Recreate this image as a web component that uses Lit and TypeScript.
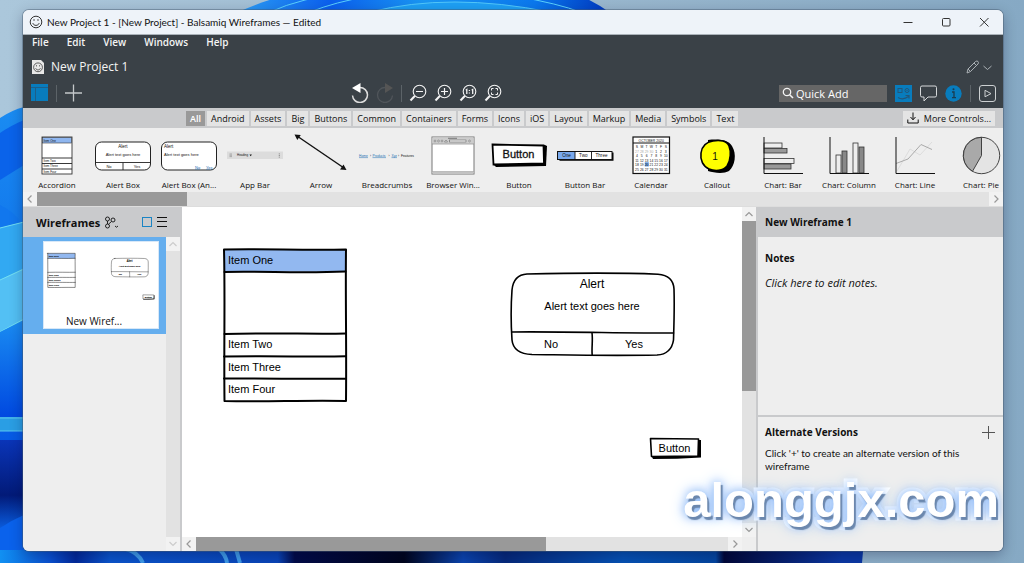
import { LitElement, html, svg, css, nothing } from "lit";
import { customElement, state } from "lit/decorators.js";
import { classMap } from "lit/directives/class-map.js";

const INK = "#111";

/* ---- library thumbnails ---- */

const thumbs: Record<string, any> = {
  accordion: svg`
    <rect x="18" y="5" width="30" height="37" fill="#fff" stroke="#333" stroke-width=".9"/>
    <rect x="18.500" y="5.500" width="29" height="5.500" fill="#8fb6ef" stroke="#333" stroke-width=".6"/>
    <path d="M18 26h30M18 31.500h30M18 37h30" stroke="#222" stroke-width=".9"/>
    <text x="19.500" y="9.600" font-size="3">Item One</text><text x="19.500" y="30" font-size="3">Item Two</text>
    <text x="19.500" y="35.400" font-size="3">Item Three</text><text x="19.500" y="41" font-size="3">Item Four</text>`,
  alert: svg`
    <rect x="5.500" y="10" width="55" height="28" rx="6" fill="#fff" stroke="#222"/>
    <path d="M5.500 30.500h55M33 30.500v7.500" stroke="#222" stroke-width=".9"/>
    <text x="33" y="16" text-anchor="middle" font-size="4.500">Alert</text>
    <text x="33" y="23.500" text-anchor="middle" font-size="4">Alert text goes here</text>
    <text x="19" y="36" text-anchor="middle" font-size="4">No</text><text x="47" y="36" text-anchor="middle" font-size="4">Yes</text>`,
  alertAndroid: svg`
    <rect x="5.500" y="10" width="55" height="28" rx="6" fill="#fff" stroke="#222"/>
    <text x="8" y="16" font-size="4.500">Alert</text><text x="8" y="23.500" font-size="4">Alert text goes here</text>
    <g fill="#1f6fb2"><text x="39" y="36.500" font-size="4">No</text><text x="50" y="36.500" font-size="4">Yes</text>
    <path d="M39 37.300h5M50 37.300h6" stroke="#1f6fb2" stroke-width=".4"/></g>`,
  appbar: svg`
    <rect x="5" y="19.500" width="56" height="7.500" fill="#dcdcdc"/>
    <path d="M7.500 22h2.500M7.500 23.300h2.500M7.500 24.600h2.500" stroke="#777" stroke-width=".5"/>
    <text x="15" y="24.300" font-size="3">Heading</text><path d="M27.500 22.600h2.400l-1.200 1.600z"/>
    <path d="M57.300 21.500v4" stroke="#555" stroke-width=".8" stroke-dasharray=".8 .8"/>`,
  arrow: svg`
    <path d="M9 4L56 36" stroke="#111" stroke-width="1.400"/>
    <path d="M6.500 2.500l6.300.4-3.500 5zM58.500 38l-6.500-.6 3.500-5z" fill="#111"/>`,
  breadcrumbs: svg`
    <g font-size="3.300"><text x="5" y="24.800" fill="#1f6fb2">Home</text><text x="16" y="24.800">›</text>
    <text x="18.500" y="24.800" fill="#1f6fb2">Products</text><text x="34.500" y="24.800">›</text>
    <text x="37.500" y="24.800" fill="#1f6fb2">Xyz</text><text x="44" y="24.800">›</text><text x="47" y="24.800">Features</text></g>
    <path d="M5 25.600h9M18.500 25.600h13.500M37.500 25.600h5.500" stroke="#1f6fb2" stroke-width=".5"/>`,
  browser: svg`
    <rect x="12" y="5" width="42" height="37" fill="#fff" stroke="#777"/>
    <rect x="12.400" y="5.400" width="41.200" height="6.400" fill="#ccc"/>
    <path d="M12.400 40h41.200v1.600h-41.200z" fill="#ccc"/>
    <path d="M12 12h42M12.500 39.700h41" stroke="#888" stroke-width=".7"/>
    <path d="M28 6.300h9" stroke="#555" stroke-width=".7"/>
    <g fill="#eee" stroke="#555" stroke-width=".5"><circle cx="15" cy="9" r=".9"/><circle cx="18.500" cy="9" r=".9"/><circle cx="22" cy="9" r=".9"/><path d="M24.500 10l1.500-2 1.500 2z"/><rect x="29.500" y="8" width="16.500" height="2"/><circle cx="49.500" cy="9" r=".9"/></g>`,
  button: svg`
    <path d="M8 15l51-2 2 1-1 20-50 1-3-3z" fill="#000"/>
    <path d="M6.500 12.500L57.500 13.500 58 31.500 7.500 32.500z" fill="#fff" stroke="#000" stroke-width="1.800"/>
    <text x="32.500" y="26.200" font-size="11" text-anchor="middle" class="strong">Button</text>`,
  buttonBar: svg`
    <path d="M6.500 20.500h55v8.200h-54z" fill="#000"/>
    <rect x="5.500" y="19.500" width="54.500" height="8" fill="#fff" stroke="#111"/>
    <rect x="6" y="20" width="17" height="7" fill="#79a9ec"/><path d="M23 19.500v8M39.500 19.500v8" stroke="#111" stroke-width=".9"/>
    <g font-size="4.600" text-anchor="middle"><text x="14.500" y="25.200">One</text><text x="31.300" y="25.200">Two</text><text x="49.500" y="25.200">Three</text></g>`,
  calendar: svg`
    <rect x="15" y="5" width="36.500" height="36.500" fill="#fff" stroke="#111" stroke-width="1.200"/>
    <path d="M15 11h36.500" stroke="#111"/><text x="33.200" y="9.600" font-size="3.400" text-anchor="middle">OCTOBER 2020</text>
    <rect x="26.800" y="30.200" width="4" height="4.300" fill="#6fa3e6"/>
    <g font-size="3.400">
    ${["S M T W T F S", "27 28 29 30 1 2 3", "4 5 6 7 8 9 10", "11 12 13 14 15 16 17", "18 19 20 21 22 23 24", "25 26 27 28 29 30 31"].map((row, r) =>
      row.split(" ").map((d, c) => svg`<text x=${19 + c * 4.8} y=${16.2 + r * 4.5} text-anchor="middle" fill=${r === 1 && c < 4 ? "#aaa" : INK}>${d}</text>`))}
    </g>`,
  callout: svg`
    <path d="M24 8c10-1 20-.5 24 6 5 8 3 20-3 25-5 3-15 2-21 0z" fill="#000"/>
    <path d="M29 9c7-1.500 14 0 16 5s2 14-2 20c-4 5-12 5.500-18 3s-9-9-8-16 5-11 12-12z" fill="#ff0" stroke="#000" stroke-width="1.600"/>
    <text x="31" y="28" font-size="10" text-anchor="middle">1</text>`,
  chartBar: svg`
    <g stroke="#333" stroke-width=".8"><rect x="14" y="11" width="18" height="5" fill="#eee"/><rect x="14" y="16.500" width="23" height="4.500" fill="#999"/>
    <rect x="14" y="26.500" width="30" height="5" fill="#eee"/><rect x="14" y="32" width="27" height="5" fill="#999"/></g>
    <path d="M14 5v36.500h39" fill="none" stroke="#111"/>`,
  chartColumn: svg`
    <g stroke="#333" stroke-width=".8"><rect x="20" y="23" width="5" height="18" fill="#eee"/><rect x="26" y="19" width="5" height="22" fill="#888"/>
    <rect x="37" y="11" width="5" height="30" fill="#eee"/><rect x="43" y="15" width="5" height="26" fill="#888"/></g>
    <path d="M14 5v36.500h39" fill="none" stroke="#111"/>`,
  chartLine: svg`
    <path d="M15 39L28 17l10 6 12-13" fill="none" stroke="#ddd"/><path d="M14 31.500l12-4.500 13-14.500 11 5" fill="none" stroke="#aaa"/>
    <path d="M14 5v36.500h39" fill="none" stroke="#111"/>`,
  chartPie: svg`
    <circle cx="33.500" cy="23.500" r="18.200" fill="#e4e4e4" stroke="#333" stroke-width=".9"/>
    <path d="M33.500 23.500V5.300a18.200 18.200 0 0 0-9 34z" fill="#a9a9a9" stroke="#333" stroke-width=".9"/>`,
};

const library: [string, string][] = [
  ["accordion", "Accordion"], ["alert", "Alert Box"], ["alertAndroid", "Alert Box (An..."], ["appbar", "App Bar"],
  ["arrow", "Arrow"], ["breadcrumbs", "Breadcrumbs"], ["browser", "Browser Win..."], ["button", "Button"],
  ["buttonBar", "Button Bar"], ["calendar", "Calendar"], ["callout", "Callout"], ["chartBar", "Chart: Bar"],
  ["chartColumn", "Chart: Column"], ["chartLine", "Chart: Line"], ["chartPie", "Chart: Pie"],
];

const categories = ["All", "Android", "Assets", "Big", "Buttons", "Common", "Containers", "Forms", "Icons", "iOS", "Layout", "Markup", "Media", "Symbols", "Text"];

/* ---- sketch shapes shared by the canvas and the navigator preview ---- */

const accordionShape = svg`
  <path d="M2 2L123 2 122 24 2 23z" fill="#92b8f0"/>
  <g fill="none" stroke="#000" stroke-width="2" stroke-linecap="round" stroke-linejoin="round">
    <path d="M1 1.500C40 .8 80 2.200 123 1.500C122.400 50 123.600 100 123 153C80 152.200 40 154 1.500 153C.8 100 2.200 50 1 1.500z"/>
    <path d="M1.500 24C40 23.100 80 25.500 122.500 23.500M1.500 86C50 84.500 90 86.500 123 85.500M1 108.500C50 107.900 90 108.900 123 108.300M1 130.500C50 130 90 131.300 123 130.700"/>
  </g>
  <g font-size="11"><text x="5" y="16">Item One</text><text x="5" y="100">Item Two</text><text x="5" y="122.500">Item Three</text><text x="5" y="145">Item Four</text></g>`;

const alertShape = svg`
  <g fill="none" stroke="#000" stroke-width="1.600" stroke-linecap="round">
    <path d="M17 2C60 1 110 .6 148 2.200C158 3 163.500 8 164 17C164.600 35 164 52 163.500 68C162 78 156 82.500 147 83C100 84 60 83 22 82.500C10 82 3 78 2 68C.8 50 1 32 2 18C3 8 8 2.500 17 2z"/>
    <path d="M2 60C50 59.500 110 61 163.500 61M82 61C83 68 81.500 76 82.200 83" />
  </g>
  <g text-anchor="middle" font-size="11"><text x="82" y="16" font-size="12">Alert</text><text x="82" y="38">Alert text goes here</text>
  <text x="41" y="76">No</text><text x="124" y="76">Yes</text></g>`;

const buttonShape = svg`
  <path d="M3 3L52 3 52 20.500C36 21.500 20 22 4 22L2 18z" fill="#000"/>
  <path d="M1.500 1.500L49.500 2 49 19 2.500 19.500z" fill="#fff" stroke="#000" stroke-width="1.600" stroke-linejoin="round"/>
  <text x="25.500" y="14.500" font-size="11" text-anchor="middle">Button</text>`;

const chevron = (d: string) => html`<svg viewBox="0 0 14 14" class="chev"><path d=${d} fill="none" stroke="currentColor" stroke-width="1.200"/></svg>`;
const UP = "M3.500 9L7 5.500 10.500 9";
const DOWN = "M3.500 5L7 8.500 10.500 5";
const LEFT = "M8.500 3.500L5 7l3.500 3.500";
const RIGHT = "M5.500 3.500L9 7l-3.500 3.500";

const smiley = svg`<circle cx="7" cy="7" r="5.800"/><path d="M3.800 8.200c1.200 2.900 5.200 2.900 6.400 0M5 4.200v1.600M9 4.200v1.600"/>`;

@customElement("desk-wallpaper")
export class DeskWallpaper extends LitElement {
  static styles = css`
    :host { display: block; overflow: hidden; background: linear-gradient(90deg, #abc7db, #9dbad0 50%, #86a9c4); }
    .art { display: block; width: 100%; height: 100%; }
  `;
  render() {
    return html`<svg class="art" viewBox="0 0 1024 563" preserveAspectRatio="none" aria-hidden="true">
      <defs>
        <linearGradient id="a" x1="0" y1="0" x2="1" y2="0"><stop offset="0" stop-color="#2c9ef5"/><stop offset=".25" stop-color="#0b5fee"/><stop offset=".5" stop-color="#1a96f2"/><stop offset=".8" stop-color="#0b78ee"/><stop offset="1" stop-color="#0038c0"/></linearGradient>
        <linearGradient id="b" x1="0" y1="0" x2="0" y2="1"><stop offset="0" stop-color="#1a8cf2"/><stop offset="1" stop-color="#0048e0"/></linearGradient>
        <linearGradient id="c" x1="0" y1="0" x2="0" y2="1"><stop offset="0" stop-color="#0a35b8"/><stop offset=".6" stop-color="#021a78"/><stop offset="1" stop-color="#0b63e8"/></linearGradient>
        <linearGradient id="d" x1="0" y1="0" x2="842" y2="0" gradientUnits="userSpaceOnUse">
          <stop offset="0" stop-color="#1190f2"/><stop offset=".06" stop-color="#0a50d0"/><stop offset=".09" stop-color="#032a9a"/><stop offset=".13" stop-color="#0b55cc"/><stop offset=".33" stop-color="#0a45b8"/><stop offset=".35" stop-color="#020b48"/><stop offset=".48" stop-color="#01051c"/><stop offset=".55" stop-color="#0b45b0"/><stop offset=".6" stop-color="#062a7c"/><stop offset=".74" stop-color="#0652b4"/><stop offset=".85" stop-color="#0446a0"/><stop offset=".86" stop-color="#020838"/><stop offset="1" stop-color="#0b38a4"/></linearGradient>
      </defs>
      <path d="M238 12C270 -2 300 -10 330 -12L560 -12Q590 -2 609 12z" fill="url(#a)"/>
      <path d="M370 12Q450 -8 550 12" fill="#1ea0f5" stroke="#52c8fb"/>
      <path d="M270 12Q300 -2 350 -8M310 12Q335 2 370 -4M515 -4Q560 4 580 12" fill="none" stroke="#5bd0fc"/>
      <path d="M0 118Q12 110 24 107V563H0z" fill="url(#b)"/>
      <path d="M0 133Q10 126 24 120V165L0 180z" fill="#0a63ea"/>
      <path d="M0 205Q16 212 24 228V260Q10 262 0 270z" fill="#1177ee"/>
      <path d="M0 228L24 222V320L0 350z" fill="#32a9f2"/>
      <path d="M0 280L24 268V320L0 332z" fill="#53c0f4"/>
      <path d="M0 228L24 222M0 280L24 269M0 332L24 319" stroke="#73e0f2" fill="none"/>
      <path d="M0 332L24 320V418H0z" fill="url(#b)"/>
      <path d="M0 417h24v14H0z" fill="#2a9ee4"/><path d="M0 418h24M0 431h24" stroke="#5bc8f0"/>
      <path d="M0 440h24v84L0 532z" fill="url(#c)"/>
      <path d="M0 528Q12 520 26 514V563H0z" fill="#0a62ec"/>
      <path d="M0 550H842Q866 550 864 540L862 563H0z" fill="url(#d)"/>
      <path d="M126 549Q138 552 143 563M219 549q7 6 8 14M236 549l4 14" stroke="#3f9be8" stroke-width="4" fill="none"/>
    </svg>`;
  }
}

@customElement("app-root")
export class AppRoot extends LitElement {
  @state() private category = "All";

  static styles = css`
    :host {
      display: grid; grid-template: minmax(0, 1fr) / minmax(0, 1fr);
      height: 100vh; font-family: "Open Sans", "Noto Sans", sans-serif; font-size: 10px; color: #111;
    }
    * { box-sizing: border-box; }
    button { font: inherit; color: inherit; border: 0; padding: 0; background: none; }
    h1, h2, h3, p, ul { margin: 0; padding: 0; font-size: inherit; font-weight: inherit; }
    ul { list-style: none; }
    svg { display: block; flex: none; }
    .wallpaper, .window { grid-area: 1 / 1; }
    .line { fill: none; stroke: currentColor; }
    .sketch text, .sketch { font-family: "Liberation Sans", sans-serif; }
    .strong { stroke: #111; stroke-width: .3px; }

    .window {
      z-index: 1; margin: 10px 21px 12px 23px; display: grid;
      grid-template: auto auto auto auto minmax(0, 1fr) / minmax(0, 1fr);
      border-radius: 6px; overflow: hidden; background: #eee;
      box-shadow: 0 0 0 1px rgba(70, 90, 110, .45), 0 4px 14px rgba(0, 0, 40, .3);
    }
    .titlebar { display: flex; align-items: center; height: 25px; background: #eef3f9; padding: 0 12px 0 6px; gap: 4px; border-bottom: 1px solid #aab2b9; color: #333; }
    .titlebar h1 { flex: 1; font-family: "Lato", sans-serif; color: #111; }
    .winbtn { width: 14px; height: 14px; margin-left: 20px; }

    .chrome { background: #3a4147; color: #f4f4f4; height: 73px; display: grid; grid-template-rows: 14px 35px 24px; }
    .menu { display: flex; align-items: center; gap: 18px; padding-left: 9px; font-weight: 600; }
    .project { display: flex; align-items: center; gap: 6px; padding: 0 11px 0 8px; font-size: 12px; }
    .project h2 { flex: 1; }
    .muted { color: #aab0b4; }
    .tools { display: grid; grid-template-columns: 33.2% auto 1fr; align-items: start; padding: 0 7px 0 8px; }
    .group { display: flex; align-items: center; gap: 7px; height: 18px; }
    .end { justify-content: flex-end; gap: 8px; }
    .sep { width: 1px; height: 17px; background: #5c6368; }
    .quick { display: flex; align-items: center; gap: 2px; width: 108px; height: 17px; background: #666; padding: 0 3px; }
    .quick input { min-width: 0; flex: 1; border: 0; padding: 0; background: none; color: #fff; font: 11px "Open Sans", sans-serif; outline: 0; }
    .quick input::placeholder { color: #fff; opacity: 1; }

    .cats { display: grid; grid-template-columns: 163px auto 1fr; align-items: center; height: 20px; background: #c9cacc; padding-right: 8px; font-size: 9px; }
    .tabs { display: flex; gap: 2px; grid-column: 2; }
    .tab, .more { height: 15px; line-height: 15px; padding: 0 4px; background: #e4e4e4; white-space: nowrap; }
    .tab.on { background: #999; color: #fff; font-weight: 600; }
    .more { justify-self: end; display: flex; align-items: center; gap: 5px; }

    .lib { display: flex; height: 64px; overflow: hidden; background: #eee; padding-left: 1px; }
    .item { flex: none; width: 66px; text-align: center; font-size: 8px; line-height: 12px; }
    .thumb { width: 66px; height: 51px; }

    .bar { display: flex; align-items: stretch; background: #e2e2e2; }
    .bar.h { height: 14px; }
    .bar.v { width: 14px; flex-direction: column; }
    .bar button { background: #f2f2f2; color: #999; flex: none; width: 14px; height: 14px; }
    .chev { width: 14px; height: 14px; }
    .dim button { color: #ccc; }
    .grip { background: #999; }
    .rest { flex: 1; }
    .lib-grip { flex: 0 0 15.3%; }
    .v-grip { flex: 0 0 51.5%; }
    .h-grip { flex: 0 0 62.5%; }

    .body { display: grid; grid-template-columns: 159px minmax(0, 1fr) 247px; min-height: 0; border-top: 1px solid #ddd; }
    .nav { display: grid; grid-template: 30px minmax(0, 1fr) / minmax(0, 1fr) 14px; border-right: 2px solid #c9cacc; background: #eee; }
    .navhead { grid-column: 1 / -1; display: flex; align-items: center; gap: 4px; padding: 0 13px; background: #c9cacc; font-weight: 700; font-size: 11px; }
    .navhead h2 { white-space: nowrap; }
    .push { margin-left: auto; }
    .card { background: #65aeee; padding: 4px 7px 5px 20px; }
    .page { background: #fff; height: 88px; display: grid; grid-template-rows: minmax(0, 1fr) 14px; border: 1px solid #d8e8f8; }
    .page svg { width: 113px; height: 69px; }
    .page text { stroke: #111; stroke-width: .4px; }
    .caption { text-align: center; padding-right: 14px; line-height: 14px; }

    .canvas { display: grid; grid-template: minmax(0, 1fr) 14px / minmax(0, 1fr) 14px; background: #fff; min-width: 0; }
    .board { position: relative; overflow: hidden; }
    .node { position: absolute; }
    .n-acc { left: 41px; top: 41px; width: 125px; height: 155px; }
    .n-alert { left: 328px; top: 65px; width: 166px; height: 85px; }
    .n-btn { left: 467px; top: 230px; width: 54px; height: 24px; }
    .corner { background: #eee; }

    .props { display: grid; grid-template-rows: 30px minmax(0, 1fr) 136px; background: #eee; border-left: 2px solid #c9cacc; }
    .props h2 { background: #c9cacc; padding: 0 7px; line-height: 30px; font-weight: 700; }
    .props h3 { font-weight: 700; }
    .notes { padding: 14px 7px; }
    .notes p { font-size: 11px; font-style: italic; padding-top: 10px; line-height: 16px; }
    .alts { border-top: 2px solid #c9cacc; padding: 6px 7px; position: relative; }
    .althead { display: flex; justify-content: space-between; align-items: center; height: 18px; }
    .alts p { font-family: "Lato", sans-serif; line-height: 13px; padding: 6px 26px 0 0; }

    .mark {
      position: absolute; right: 4px; bottom: 23px; z-index: 2; white-space: nowrap; pointer-events: none;
      font: 700 49px/56px "Liberation Sans", sans-serif; color: #fff; -webkit-text-stroke: 7px #fff; paint-order: stroke fill; stroke-linejoin: round;
      text-shadow: 2px 3px 1px #6b87ad, 0 0 10px #7fb0f5, 0 0 16px #a8cbfa;
    }
  `;

  private scrollButtons(vertical: boolean, grip: string) {
    return html`
      <button aria-label="Scroll back">${chevron(vertical ? UP : LEFT)}</button>
      ${grip ? html`<span class="grip ${grip}"></span>` : nothing}
      <span class="rest"></span>
      <button aria-label="Scroll forward">${chevron(vertical ? DOWN : RIGHT)}</button>`;
  }

  private lens(inner: unknown, label: string) {
    return html`<button aria-label=${label}><svg width="18" height="18" viewBox="0 0 18 18" class="line">
      <circle cx="10.500" cy="7.500" r="6.300" stroke-width="1.100"/><path d="M5.800 12L1.500 16.500" stroke-width="2"/>${inner}</svg></button>`;
  }

  render() {
    return html`
      <desk-wallpaper class="wallpaper"></desk-wallpaper>
      <main class="window">
        <header class="titlebar">
          <svg width="14" height="14" viewBox="0 0 14 14" class="line">${smiley}</svg>
          <h1>New Project 1 - [New Project] - Balsamiq Wireframes — Edited</h1>
          <button class="winbtn" aria-label="Minimize"><svg width="14" height="14" class="line"><path d="M2.500 7.500h9"/></svg></button>
          <button class="winbtn" aria-label="Maximize"><svg width="14" height="14" class="line"><rect x="3.500" y="3.500" width="7.500" height="7.500" rx="1"/></svg></button>
          <button class="winbtn" aria-label="Close"><svg width="14" height="14" class="line"><path d="M3 3l8.500 8.500M11.500 3L3 11.500"/></svg></button>
        </header>

        <div class="chrome">
          <nav class="menu">${["File", "Edit", "View", "Windows", "Help"].map((m) => html`<button>${m}</button>`)}</nav>
          <div class="project">
            <svg width="14" height="14" viewBox="0 0 14 14"><path d="M1 0h9l3 3v11H1z" fill="#e8e8e8"/><g fill="none" stroke="#333" transform="translate(1.700 2) scale(.76)">${smiley}</g></svg>
            <h2>New Project 1</h2>
            <button class="muted" aria-label="Edit mode"><svg width="26" height="14" viewBox="0 0 26 14" class="line">
              <path d="M1 13l1-4 7.500-7.500q1.500-1 2.500 0t0 2.500L4.500 11.500zM8 3l2.700 2.700M2 9l2.500 2.500"/><path d="M17.500 6l4 3.500 4-3.500"/></svg></button>
          </div>
          <div class="tools">
            <div class="group">
              <button aria-label="Toggle navigator"><svg width="18" height="18"><path d="M0 0h17v17H0z" fill="#087cbd"/><path d="M0 3.500h17M4.500 4v13" stroke="#1d5f8a"/></svg></button>
              <span class="sep"></span>
              <button aria-label="Add wireframe"><svg width="18" height="18" class="line"><path d="M9.500 .5v17M1 9h17" stroke="#c4c8ca" stroke-width="1.300"/></svg></button>
            </div>
            <div class="group">
              <button aria-label="Undo"><svg width="18" height="20" viewBox="0 0 18 20"><path d="M9 4.500a7.500 7.500 0 1 1-7.500 8" fill="none" stroke="#ddd" stroke-width="1.500"/><path d="M1 5L9.500 0v10z" fill="#fff"/></svg></button>
              <button aria-label="Redo"><svg width="18" height="20" viewBox="0 0 18 20"><path d="M9 4.500a7.500 7.500 0 1 0 7.500 8" fill="none" stroke="#50555a" stroke-width="1.300"/><path d="M17 5L9 0v10z" fill="#555"/></svg></button>
              <span class="sep"></span>
              ${this.lens(svg`<path d="M7 7.500h7" stroke-width="1.200"/>`, "Zoom out")}
              ${this.lens(svg`<path d="M7 7.500h7M10.500 4v7" stroke-width="1.200"/>`, "Zoom in")}
              ${this.lens(svg`<path d="M6.800 6.300l1-.8v4.500M12.700 6.300l1-.8v4.500M10.400 6v1M10.400 8.600v1" stroke-width="1.300"/>`, "Actual size")}
              ${this.lens(svg`<path d="M7.500 6.500v-2h2M11.500 4.500h2v2M13.500 8.500v2h-2M9.500 10.500h-2v-2"/>`, "Fit")}
            </div>
            <div class="group end">
              <label class="quick"><svg width="12" height="12" viewBox="0 0 12 12" class="line"><circle cx="5" cy="5" r="3.700" stroke-width="1.300"/><path d="M7.700 7.700L11 11" stroke-width="1.600"/></svg>
                <input placeholder="Quick Add" aria-label="Quick Add"></label>
              <button aria-label="UI library"><svg width="17" height="17"><path d="M0 0h17v17H0z" fill="#087cbd"/><g fill="none" stroke="#22567a"><rect x="3" y="3.500" width="4" height="4"/><circle cx="12" cy="5.500" r="2"/><path d="M11.500 5.500h1"/><path d="M3 12.500q5 3 10.500-1M10.500 10.500h3.500v3" stroke-width="1.200"/></g></svg></button>
              <button aria-label="Comments"><svg width="17" height="17" class="line"><path d="M2 1h13q1.500 0 1.500 1.500v8q0 1.500-1.500 1.500H8l-4 4v-4H2q-1.500 0-1.500-1.500v-8Q.5 1 2 1z" stroke="#d5d8da"/></svg></button>
              <button aria-label="Properties"><svg width="17" height="17"><circle cx="8.500" cy="8.500" r="8.200" fill="#087cbd"/><path d="M7 7h2v5.500M7 12.700h4" fill="none" stroke="#1b3b4f" stroke-width="1.300"/><circle cx="8.500" cy="4.300" r="1" fill="#1b3b4f"/></svg></button>
              <span class="sep"></span>
              <button aria-label="Present"><svg width="17" height="17" class="line"><rect x=".5" y=".5" width="16" height="16" rx="2.500" stroke="#ccd0d2"/><path d="M6 5.300v6.500l6-3.200z" stroke="#ccd0d2"/></svg></button>
            </div>
          </div>
        </div>

        <div class="cats">
          <div class="tabs">${categories.map((c) => html`<button class=${classMap({ tab: true, on: c === this.category })} @click=${() => (this.category = c)}>${c}</button>`)}</div>
          <button class="more"><svg width="12" height="12" viewBox="0 0 12 12" class="line"><path d="M.8 7.500v3.500h10.400V7.500M6 .5v7M3.500 5L6 7.800 8.500 5"/></svg>More Controls...</button>
        </div>

        <div>
          <ul class="lib">${library.map(([key, name]) => html`<li class="item"><svg class="thumb sketch" viewBox="0 -4 66 51" fill="#111">${thumbs[key]}</svg>${name}</li>`)}</ul>
          <div class="bar h">${this.scrollButtons(false, "lib-grip")}</div>
        </div>

        <div class="body">
          <aside class="nav">
            <div class="navhead">
              <h2>Wireframes</h2>
              <svg width="15" height="13" viewBox="0 0 15 13" class="line" stroke-width=".9"><circle cx="3.500" cy="3" r="2"/><circle cx="3.500" cy="10" r="2"/><circle cx="9" cy="4" r="2"/><path d="M3.500 5v3M4.500 8.200L7.500 5.500M11 10l1.500 1.200L14 10"/></svg>
              <button class="push" aria-label="Thumbnails"><svg width="10" height="10" class="line"><rect x=".5" y=".5" width="9" height="9" stroke="#1a84c4" stroke-width="1"/></svg></button>
              <button aria-label="List"><svg width="11" height="10" class="line"><path d="M1 .5h10M1 4.500h10M1 9.500h10" stroke="#111"/></svg></button>
            </div>
            <div>
              <div class="card"><div class="page">
                <svg class="sketch" viewBox="0 0 113 69"><g transform="translate(3.500 11) scale(.225)">${accordionShape}</g><g transform="translate(67 16) scale(.227)">${alertShape}</g><g transform="translate(98.500 52.500) scale(.23)">${buttonShape}</g></svg>
                <span class="caption">New Wiref...</span>
              </div></div>
            </div>
            <div class="bar v dim">${this.scrollButtons(true, "")}</div>
          </aside>

          <section class="canvas">
            <div class="board sketch">
              <svg class="node n-acc" viewBox="0 0 125 155">${accordionShape}</svg>
              <svg class="node n-alert" viewBox="0 0 166 85">${alertShape}</svg>
              <svg class="node n-btn" viewBox="0 0 54 24">${buttonShape}</svg>
            </div>
            <div class="bar v">${this.scrollButtons(true, "v-grip")}</div>
            <div class="bar h">${this.scrollButtons(false, "h-grip")}</div>
            <span class="corner"></span>
          </section>

          <aside class="props">
            <h2>New Wireframe 1</h2>
            <section class="notes"><h3>Notes</h3><p>Click here to edit notes.</p></section>
            <section class="alts">
              <div class="althead"><h3>Alternate Versions</h3>
                <button aria-label="Add version"><svg width="15" height="15" class="line"><path d="M7.500 1v13M1 7.500h13" stroke="#555"/></svg></button></div>
              <p>Click '+' to create an alternate version of this wireframe</p>
              <span class="mark">alonggjx.com</span>
            </section>
          </aside>
        </div>
      </main>`;
  }
}
